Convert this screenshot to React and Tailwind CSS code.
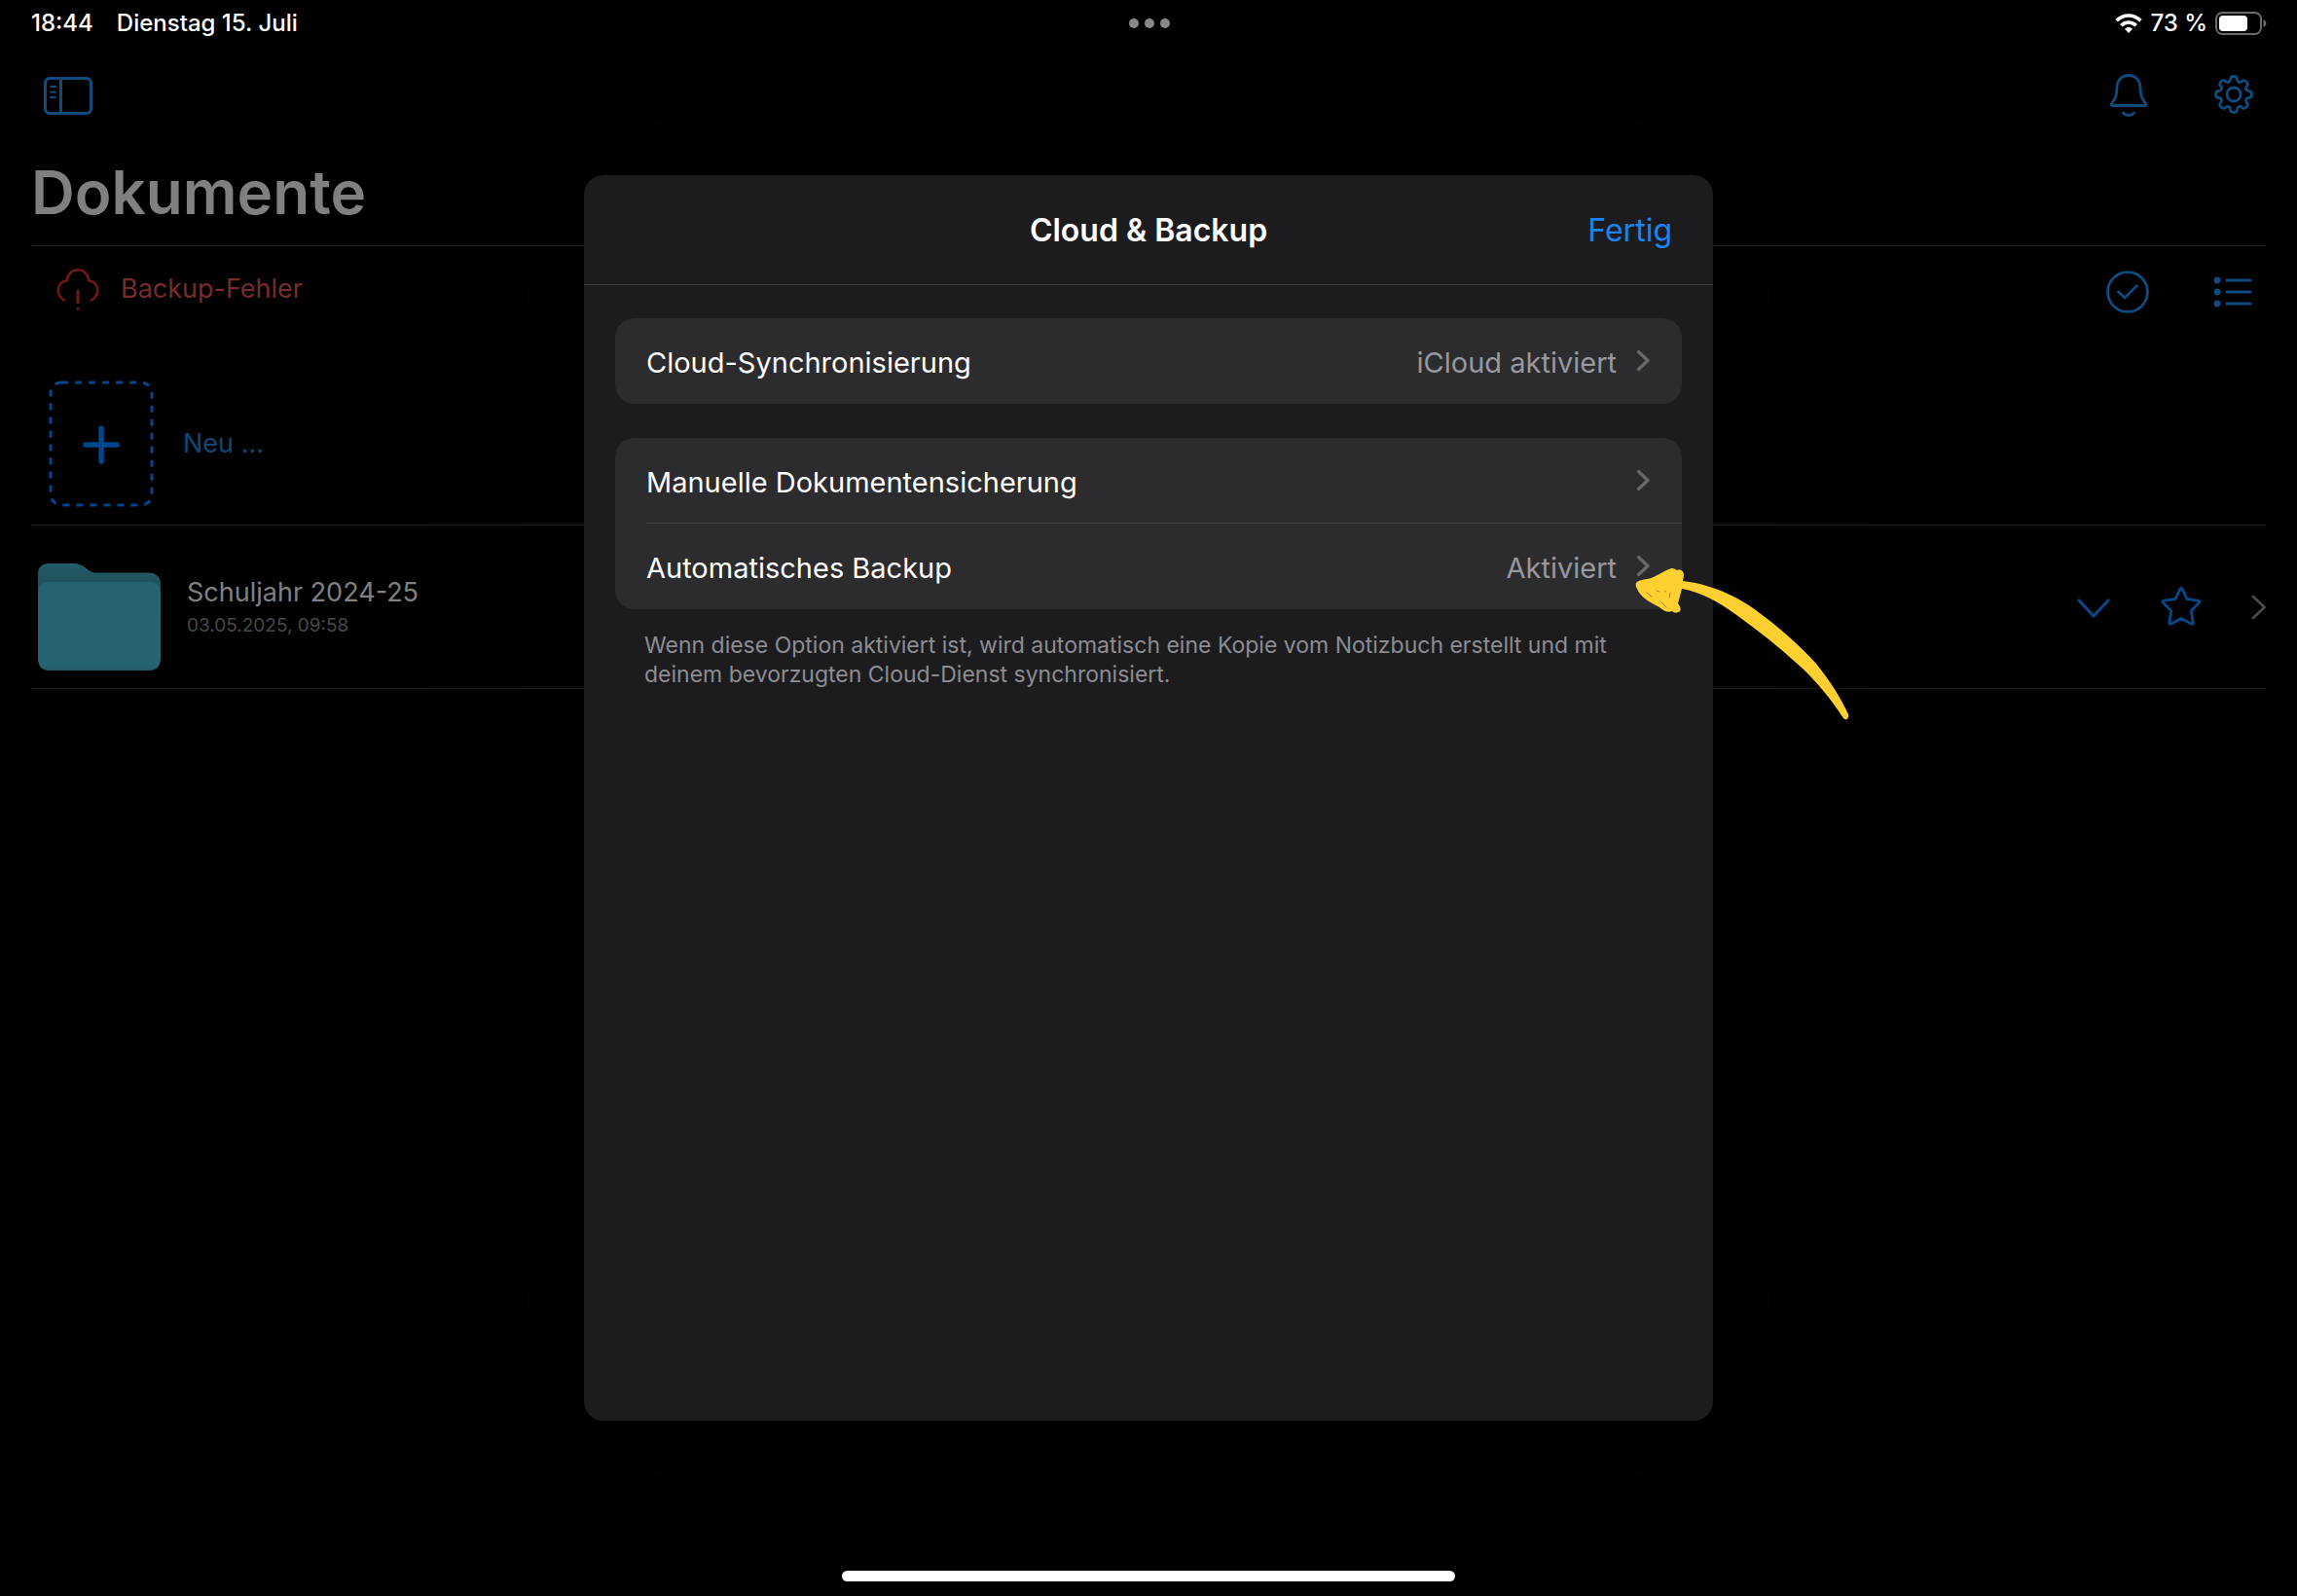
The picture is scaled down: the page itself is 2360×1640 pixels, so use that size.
const gearTeeth = [0, 45, 90, 135, 180, 225, 270, 315];

function Icon({ name }) {
  switch (name) {
    case "sidebar":
      return (
        <svg className="w-[50px] h-[46px]" viewBox="0 0 50 46" fill="none" stroke="currentColor" strokeWidth={3}>
          <rect x="1.5" y="4.5" width="47" height="36" rx="4.5" />
          <path d="M17.5 4.5v36" />
          <path strokeWidth={2} strokeLinecap="round" d="M7 13h5M7 18.500h5M7 24h5" />
        </svg>
      );
    case "bell":
      return (
        <svg className="w-[40px] h-[48px]" viewBox="0 0 40 48" fill="none" stroke="currentColor" strokeWidth={2.8} strokeLinecap="round" strokeLinejoin="round">
          <path d="M20 4.500c-7.300 0-12 5.500-12 12.500 0 9.500-2.600 12.500-5.600 16.600-.8 1.100-.4 1.900.8 1.900h33.600c1.200 0 1.600-.8.8-1.900-3-4.100-5.600-7.100-5.600-16.600 0-7-4.700-12.500-12-12.500z" />
          <path d="M14.500 43c3 3.500 8 3.500 11 0" />
        </svg>
      );
    case "gear":
      return (
        <svg className="w-[40px] h-[40px]" viewBox="0 0 40 40" fill="none" stroke="currentColor" strokeWidth={2.8} strokeLinecap="round">
          <circle cx="20" cy="20" r="7" />
          {gearTeeth.map((deg) => (
            <path
              key={deg}
              transform={`rotate(${deg} 20 20)`}
              d="M14.800 7.400C16.200 6.800 16.400 6 16.500 4.500C16.700 .5 23.300 .5 23.500 4.500C23.600 6 23.800 6.800 25.200 7.400"
            />
          ))}
        </svg>
      );
    case "cloud":
      return (
        <svg className="w-[44px] h-[44px]" viewBox="0 0 44 44" fill="none" stroke="currentColor" strokeWidth={2.6} strokeLinecap="round">
          <path d="M8 33.500C-1.500 27.500 .5 14.500 10.500 13.500C13 -1.500 31 -1.500 33.500 13.500C43.500 14.500 45.500 27.500 36 33.500" />
          <path d="M22 24v11.500M22 42v.4" strokeWidth={3} />
        </svg>
      );
    case "check":
      return (
        <svg className="w-[44px] h-[44px]" viewBox="0 0 44 44" fill="none" stroke="currentColor" strokeWidth={2.8} strokeLinecap="round" strokeLinejoin="round">
          <circle cx="22" cy="22" r="20.400" />
          <path d="M12.500 22l6.500 6L31.500 15.500" />
        </svg>
      );
    case "list":
      return (
        <svg className="w-[40px] h-[40px]" viewBox="0 0 40 40" fill="none" stroke="currentColor" strokeWidth={3} strokeLinecap="round">
          <path d="M14 8h24M14 20h24M14 32h24" />
          <g fill="currentColor" stroke="none">
            <circle cx="4" cy="8" r="3.400" />
            <circle cx="4" cy="20" r="3.400" />
            <circle cx="4" cy="32" r="3.400" />
          </g>
        </svg>
      );
    case "down":
      return (
        <svg className="w-[36px] h-[40px]" viewBox="0 0 36 40" fill="none" stroke="currentColor" strokeWidth={3.2} strokeLinecap="round" strokeLinejoin="round">
          <path d="M3 13l15 16L33 13" />
        </svg>
      );
    case "star":
      return (
        <svg className="w-[42px] h-[42px]" viewBox="0 0 42 42" fill="none" stroke="currentColor" strokeWidth={2.8} strokeLinejoin="round">
          <path d="M20 3.200Q21 1 22 3.200L27 13.600L38.700 15.200Q41 15.800 39.400 17.400L31.200 25.800L33.200 37.600Q33.400 40 31.200 39L21 33.600L10.800 39Q8.600 40 8.800 37.600L10.800 25.800L2.600 17.400Q1 15.800 3.300 15.200L15 13.600z" />
        </svg>
      );
    case "chevron":
      return (
        <svg className="w-[15px] h-[28px]" viewBox="0 0 15 28" fill="none" stroke="currentColor" strokeWidth={2.8} strokeLinecap="round">
          <path d="M2 3l11.500 11L2 25" />
        </svg>
      );
    case "wifi":
      return (
        <svg className="w-[28px] h-[22px]" viewBox="0 0 28 22" fill="none" stroke="currentColor" strokeWidth={3.6}>
          <path d="M1.600 8.200C8.500 1.200 19.500 1.200 26.400 8.200" />
          <path d="M6.300 13.200C10.700 9 17.300 9 21.700 13.200" />
          <path d="M14 21l-4-4.200c2.300-2.300 5.700-2.300 8 0z" fill="currentColor" stroke="none" />
        </svg>
      );
    case "battery":
      return (
        <svg className="w-[54px] h-[24px]" viewBox="0 0 54 24" fill="none">
          <rect x="1" y="1" width="46" height="22" rx="6.500" stroke="#6b6b6b" strokeWidth={2} />
          <rect x="4" y="4" width="29" height="16" rx="4" fill="#fff" />
          <path d="M49.500 8c3.800 1.500 3.800 6.500 0 8z" fill="#6b6b6b" />
        </svg>
      );
    default:
      return null;
  }
}

function Folder() {
  return (
    <svg className="w-[126px] h-[110px]" viewBox="0 0 126 110">
      <defs>
        <linearGradient id="folder-back" x1="0" y1="0" x2="0" y2="1">
          <stop offset="0" stopColor="#235c68" />
          <stop offset=".25" stopColor="#1f4f5a" />
        </linearGradient>
        <linearGradient id="folder-front" x1="0" y1="0" x2="0" y2="1">
          <stop offset="0" stopColor="#286270" />
          <stop offset=".12" stopColor="#256371" />
          <stop offset=".92" stopColor="#256573" />
          <stop offset="1" stopColor="#215b68" />
        </linearGradient>
      </defs>
      <path fill="url(#folder-back)" d="M0 11C0 4 4 0 11 0h26c5 0 8 1.500 12 4.500 5 4 7 5 12 5h53c7 0 12 4 12 11V90H0z" />
      <path fill="url(#folder-front)" d="M0 30c0-7 4-11 11-11h104c7 0 11 4 11 11v68c0 7-4 12-11 12H11c-7 0-11-5-11-12z" />
    </svg>
  );
}

// Hand-drawn marker arrow pointing at the automatic backup row
function Arrow() {
  return (
    <svg className="absolute -right-[174px] top-[45px] w-[222px] h-[160px] pointer-events-none" viewBox="0 0 222 160" fill="#ffd02f">
      <path d="M1 16C3 13 10 12.500 15 11.500C22 9 30 3.500 37 1Q40 .5 43 3C47 1.500 50 4 50 8L49 14C75 17 100 27 124 44C146 60 168 79 186 99C200 116 211 134 219 151C220 155 217 158 214 155C203 138 188 119 172 104C152 86 138 74 119 60C98 44 76 27 48 22L44 37C48 42 47 46 44 46Q41 48 38 45C32 47 29 44 25 41C15 36 5 30 2 22Q0 19 1 16z" />
      <path d="M12 26l5 4M22 24l3 1M31 24v1M36 26l-1 5M27 36l5 5" fill="none" stroke="#a8872a" strokeWidth={1} strokeLinecap="round" />
    </svg>
  );
}

function SettingsRow({ label, value, children }) {
  return (
    <li className="relative pl-8">
      <button className="w-full h-[88px] pr-[33px] flex items-center justify-between text-[29px] leading-9 text-white text-left">
        <span className="pt-[3px]">{label}</span>
        <span className="flex items-center gap-5 text-[#98989e]">
          <span className="pt-[3px]">{value}</span>
          <svg className="w-[14px] h-[24px] text-[#69696c]" viewBox="0 0 14 24" fill="none" stroke="currentColor" strokeWidth={3.2} strokeLinecap="round" strokeLinejoin="round">
            <path d="M2.500 2.500L12 11.500L2.500 20.500" />
          </svg>
        </span>
      </button>
      {children}
    </li>
  );
}

export default function App() {
  return (
    <div className="relative min-h-screen bg-black flex flex-col font-['Inter','Liberation_Sans',sans-serif]">
      {/* Status bar */}
      <div className="h-12 pl-8 pr-[30px] grid grid-cols-3 items-center text-2xl leading-8 font-medium text-white">
        <div className="flex gap-6">
          <span>18:44</span>
          <span>Dienstag 15. Juli</span>
        </div>
        <div className="flex justify-center gap-[6px]">
          <span className="w-[10px] h-[10px] rounded-full bg-[#8a8a8a]" />
          <span className="w-[10px] h-[10px] rounded-full bg-[#8a8a8a]" />
          <span className="w-[10px] h-[10px] rounded-full bg-[#8a8a8a]" />
        </div>
        <div className="flex items-center justify-end gap-2">
          <Icon name="wifi" />
          <span>73 %</span>
          <Icon name="battery" />
        </div>
      </div>

      {/* Documents */}
      <main className="px-8">
        <div className="h-[100px] px-[13px] flex items-center justify-between text-[#0f4b7f]">
          <button aria-label="Seitenleiste" className="pt-[2px]">
            <Icon name="sidebar" />
          </button>
          <div className="pb-[3px] flex items-center gap-[68px]">
            <button aria-label="Mitteilungen">
              <Icon name="bell" />
            </button>
            <button aria-label="Einstellungen">
              <Icon name="gear" />
            </button>
          </div>
        </div>
        <h1 className="h-[105px] pt-[10px] text-[62px] leading-[80px] font-semibold text-[#808080] border-b border-[#1f1f1f]">
          Dokumente
        </h1>

        <div className="h-[94px] pl-[26px] pr-[14px] flex items-center justify-between">
          <button className="pb-[6px] flex items-center gap-[22px] text-[27px] leading-9 text-[#782b2a]">
            <span className="text-[#701814]">
              <Icon name="cloud" />
            </span>
            Backup-Fehler
          </button>
          <div className="flex items-center gap-[66px] text-[#0f4b7f]">
            <button aria-label="Auswählen">
              <Icon name="check" />
            </button>
            <button aria-label="Listenansicht">
              <Icon name="list" />
            </button>
          </div>
        </div>

        <div className="h-[193px] pl-[18px] pb-[18px] flex items-end border-b border-[#1c1c1c]">
          <button className="flex items-center gap-[30px] text-[27px] leading-9 text-[#0d4878]">
            <svg className="w-[108px] h-[130px] text-[#00468c]" viewBox="0 0 108 130" fill="none" stroke="currentColor">
              <rect x="2" y="2" width="104" height="126" rx="11" strokeWidth={3} strokeDasharray="7 7" />
              <path strokeWidth={5.5} strokeLinecap="round" d="M54 49v34M38 66h32" />
            </svg>
            Neu …
          </button>
        </div>

        <div className="h-[168px] pl-[7px] flex items-center justify-between border-b border-[#1c1c1c]">
          <div className="flex items-center gap-[27px]">
            <div className="pt-[20px]">
              <Folder />
            </div>
            <div className="pt-[3px]">
              <p className="text-[27px] leading-9 text-[#808080]">Schuljahr 2024-25</p>
              <p className="text-[19px] leading-8 text-[#48484b]">03.05.2025, 09:58</p>
            </div>
          </div>
          <div className="flex items-center gap-[51px] text-[#06488a]">
            <button aria-label="Mehr">
              <Icon name="down" />
            </button>
            <button aria-label="Favorit" className="pb-[2px]">
              <Icon name="star" />
            </button>
            <button aria-label="Öffnen" className="text-[#4a4a4a]">
              <Icon name="chevron" />
            </button>
          </div>
        </div>
      </main>

      {/* Dialog */}
      <div className="absolute inset-0 py-[180px] flex justify-center">
        <div role="dialog" aria-labelledby="dialog-title" className="w-full max-w-[1160px] rounded-[20px] bg-[#1c1c1e] shadow-[0_0_160px_60px_rgba(0,50,0,0.04)]">
          <div className="h-[113px] pt-[2px] px-[42px] grid grid-cols-[1fr_auto_1fr] items-center border-b border-[#3d3d40] text-[32px] leading-10">
            <h2 id="dialog-title" className="col-start-2 font-semibold text-white">
              Cloud & Backup
            </h2>
            <button className="justify-self-end text-[#1a84f0]">Fertig</button>
          </div>
          <div className="px-8 pt-[34px]">
            <ul className="rounded-[20px] bg-[#2c2c2e]">
              <SettingsRow label="Cloud-Synchronisierung" value="iCloud aktiviert" />
            </ul>
            <ul className="mt-[35px] rounded-[20px] bg-[#2c2c2e]">
              <SettingsRow label="Manuelle Dokumentensicherung" />
              <li className="ml-8 -mt-px h-px bg-[#464649]" />
              <SettingsRow label="Automatisches Backup" value="Aktiviert">
                <Arrow />
              </SettingsRow>
            </ul>
            <p className="mt-[22px] px-[30px] text-[23px] leading-[30px] text-[#8d8d93]">
              Wenn diese Option aktiviert ist, wird automatisch eine Kopie vom Notizbuch erstellt und mit deinem bevorzugten Cloud-Dienst synchronisiert.
            </p>
          </div>
        </div>
      </div>

      {/* Home indicator */}
      <div className="relative mt-auto mb-[15px] self-center w-[630px] h-[11px] rounded-full bg-white" />
    </div>
  );
}
